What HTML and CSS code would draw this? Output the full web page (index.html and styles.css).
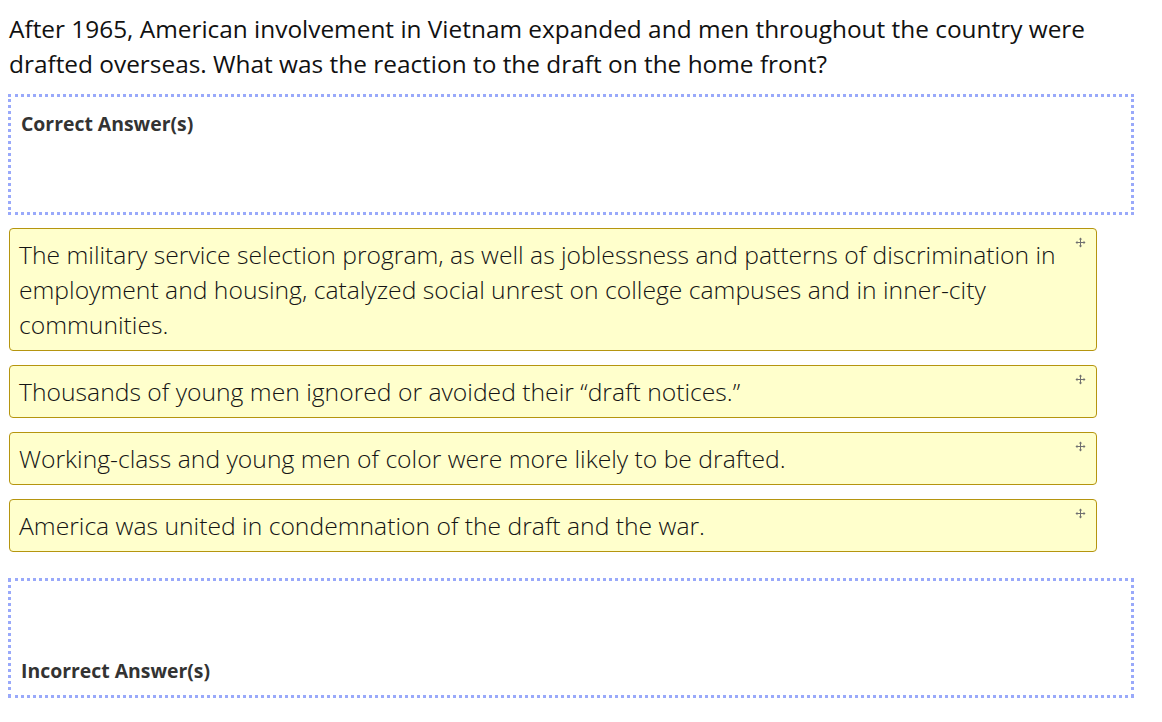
FILE: index.html
```html
<!DOCTYPE html>
<html lang="en">
<head>
<meta charset="utf-8">
<title>Drag and drop question</title>
<link rel="stylesheet" href="styles.css">
</head>
<body>
<main class="question">
  <p class="prompt">After 1965, American involvement in Vietnam expanded and men throughout the country were drafted overseas. What was the reaction to the draft on the home front?</p>

  <section class="dropzone dropzone-top">
    <h3 class="zone-label">Correct Answer(s)</h3>
  </section>

  <ul class="choices">
    <li class="choice">
      <span class="choice-text">The military service selection program, as well as joblessness and patterns of discrimination in employment and housing, catalyzed social unrest on college campuses and in inner-city communities.</span>
      <svg class="move" viewBox="0 0 11 11" aria-hidden="true"><path d="M5.5 0.5 L3.8 2.4 H5 V5 H2.4 V3.8 L0.5 5.5 L2.4 7.2 V6 H5 V8.6 H3.8 L5.5 10.5 L7.2 8.6 H6 V6 H8.6 V7.2 L10.5 5.5 L8.6 3.8 V5 H6 V2.4 H7.2 Z"/></svg>
    </li>
    <li class="choice">
      <span class="choice-text">Thousands of young men ignored or avoided their “draft notices.”</span>
      <svg class="move" viewBox="0 0 11 11" aria-hidden="true"><path d="M5.5 0.5 L3.8 2.4 H5 V5 H2.4 V3.8 L0.5 5.5 L2.4 7.2 V6 H5 V8.6 H3.8 L5.5 10.5 L7.2 8.6 H6 V6 H8.6 V7.2 L10.5 5.5 L8.6 3.8 V5 H6 V2.4 H7.2 Z"/></svg>
    </li>
    <li class="choice">
      <span class="choice-text">Working-class and young men of color were more likely to be drafted.</span>
      <svg class="move" viewBox="0 0 11 11" aria-hidden="true"><path d="M5.5 0.5 L3.8 2.4 H5 V5 H2.4 V3.8 L0.5 5.5 L2.4 7.2 V6 H5 V8.6 H3.8 L5.5 10.5 L7.2 8.6 H6 V6 H8.6 V7.2 L10.5 5.5 L8.6 3.8 V5 H6 V2.4 H7.2 Z"/></svg>
    </li>
    <li class="choice">
      <span class="choice-text">America was united in condemnation of the draft and the war.</span>
      <svg class="move" viewBox="0 0 11 11" aria-hidden="true"><path d="M5.5 0.5 L3.8 2.4 H5 V5 H2.4 V3.8 L0.5 5.5 L2.4 7.2 V6 H5 V8.6 H3.8 L5.5 10.5 L7.2 8.6 H6 V6 H8.6 V7.2 L10.5 5.5 L8.6 3.8 V5 H6 V2.4 H7.2 Z"/></svg>
    </li>
  </ul>

  <section class="dropzone dropzone-bottom">
    <h3 class="zone-label">Incorrect Answer(s)</h3>
  </section>
</main>
</body>
</html>
```

FILE: styles.css
```css
html, body {
  margin: 0;
  padding: 0;
  background: #ffffff;
}

body {
  font-family: "Open Sans", "Noto Sans", "Liberation Sans", sans-serif;
  color: #1b1b1b;
}

.question {
  width: 1126px;
  padding: 11px 0 0 8px;
}

.prompt {
  margin: 0 0 13px 1px;
  font-size: 24.4px;
  line-height: 35px;
  font-weight: 400;
  color: #111111;
}

.dropzone {
  border: 3px dotted #99a9fa;
  display: flex;
  flex-direction: column;
  padding: 14px 10px 11px;
  box-sizing: border-box;
}

.dropzone-top {
  height: 121px;
  justify-content: flex-start;
}

.dropzone-bottom {
  height: 120px;
  margin-top: 26px;
  justify-content: flex-end;
}

.zone-label {
  margin: 0;
  font-size: 19.4px;
  line-height: 26px;
  font-weight: 700;
  color: #333333;
}

.choices {
  list-style: none;
  margin: 13px 0 0 1px;
  padding: 0;
  width: 1088px;
  display: flex;
  flex-direction: column;
  gap: 14px;
}

.choice {
  position: relative;
  background: #ffffcc;
  border: 1px solid #b5950f;
  border-radius: 4px;
  padding: 8px 30px 8px 9px;
  font-size: 24.7px;
  line-height: 35px;
  font-weight: 300;
  color: #141414;
}

.move {
  position: absolute;
  top: 8px;
  right: 10px;
  width: 11px;
  height: 11px;
  fill: #707070;
}
```
